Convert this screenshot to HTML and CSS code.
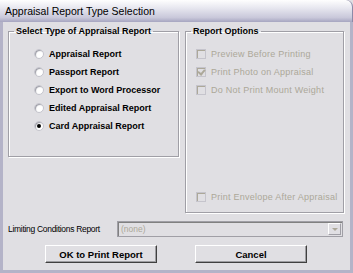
FILE: index.html
```html
<!DOCTYPE html>
<html lang="en">
<head>
  <meta charset="UTF-8" />
  <title>Appraisal Report Type Selection</title>
  <link rel="stylesheet" href="styles.css">
</head>
<body>

<div class="window">
  <div class="titlebar">Appraisal Report Type Selection</div>

  <div class="client">
    <div class="groups">
      <!-- Report type -->
      <fieldset class="group typeGroup">
        <legend>Select Type of Appraisal Report</legend>
        <div class="items">
          <div class="option"><span class="radio"></span>Appraisal Report</div>
          <div class="option"><span class="radio"></span>Passport Report</div>
          <div class="option"><span class="radio"></span>Export to Word Processor</div>
          <div class="option"><span class="radio"></span>Edited Appraisal Report</div>
          <div class="option"><span class="radio checked"></span>Card Appraisal Report</div>
        </div>
      </fieldset>

      <!-- Options -->
      <fieldset class="group optGroup">
        <legend>Report Options</legend>
        <div class="items">
          <div class="check"><span class="box"></span>Preview Before Printing</div>
          <div class="check"><span class="box ticked"></span>Print Photo on Appraisal</div>
          <div class="check"><span class="box"></span>Do Not Print Mount Weight</div>
          <div class="spacer"></div>
          <div class="check"><span class="box"></span>Print Envelope After Appraisal</div>
        </div>
      </fieldset>
    </div>

    <div class="limitRow">
      <span class="limitLabel">Limiting Conditions Report</span>
      <div class="combo">
        <span class="comboText">(none)</span>
        <span class="comboBtn"></span>
      </div>
    </div>

    <div class="buttons">
      <button class="btn">OK to Print Report</button>
      <button class="btn">Cancel</button>
    </div>
  </div>
</div>

</body>
</html>
```

FILE: styles.css
```css
* { box-sizing: border-box; }

body {
  margin: 0;
  background: #e0dfe3;
  font-family: "Liberation Sans", Arial, sans-serif;
  font-size: 9px;
  color: #000;
}

.window {
  width: 353px;
  height: 273px;
  display: flex;
  flex-direction: column;
  background: #e0dfe3;
  border-left: 3px solid #b4b3c8;
  border-right: 3px solid #b4b3c8;
  border-bottom: 3px solid #b4b3c8;
  border-top-right-radius: 7px;
}

.titlebar {
  height: 22px;
  margin: 0 -3px;
  padding: 5px 0 0 5px;
  font-size: 10.5px;
  color: #000;
  background: linear-gradient(to bottom, #fefefe 0%, #e8e8f0 35%, #c9c8da 80%, #a6a5c0 100%);
  border-top-right-radius: 7px;
  border-right: 1px solid #8b8aa8;
}

.client {
  flex-grow: 1;
  display: flex;
  flex-direction: column;
  padding: 4px 6px 0 5px;
}

.groups {
  display: flex;
  align-items: flex-start;
  gap: 6px;
}

.group {
  margin: 0;
  padding: 0;
  border: 1px solid #a09fa6;
  box-shadow: inset 1px 1px 0 #fff, 1px 1px 0 #fff;
  display: flex;
  flex-direction: column;
}

.group legend {
  font-weight: bold;
  color: #000;
  white-space: nowrap;
  padding: 0 2px;
  margin-left: 5px;
  font-size: 9px;
}

.items {
  flex-grow: 1;
  display: flex;
  flex-direction: column;
}

.typeGroup {
  width: 171px;
  height: 131px;
}

.typeGroup .items {
  padding: 9px 0 0 25px;
}

.optGroup {
  width: 159px;
  height: 187px;
  color: #aca899;
}

.optGroup .items {
  padding: 9px 0 6px 10px;
}

.option, .check {
  height: 18px;
  display: flex;
  align-items: center;
  flex-shrink: 0;
}

.option {
  font-weight: bold;
}

.check {
  letter-spacing: 0.25px;
}

.radio {
  width: 10px;
  height: 10px;
  margin-right: 5px;
  border-radius: 50%;
  background: #fff;
  border: 1px solid #c4c4cc;
  box-shadow: inset 1px 1px 1px #9a9aa4;
  position: relative;
}

.radio.checked::after {
  content: "";
  position: absolute;
  left: 2px;
  top: 2px;
  width: 4px;
  height: 4px;
  border-radius: 50%;
  background: #000;
}

.box {
  width: 10px;
  height: 10px;
  margin-right: 5px;
  border: 1px solid #c5c4cc;
  box-shadow: inset 1px 1px 0 #aca899;
  position: relative;
}

.box.ticked::after {
  content: "";
  position: absolute;
  left: 2px;
  top: 0;
  width: 3px;
  height: 5px;
  border: solid #aca899;
  border-width: 0 2px 2px 0;
  transform: rotate(40deg);
}

.spacer {
  flex-grow: 1;
}

.limitRow {
  display: flex;
  align-items: center;
  margin-top: 8px;
  height: 16px;
}

.limitLabel {
  width: 109px;
  font-size: 8.5px;
  letter-spacing: -0.3px;
}

.combo {
  width: 226px;
  height: 16px;
  display: flex;
  align-items: center;
  border: 1px solid #a09fa6;
  box-shadow: inset 1px 1px 0 #808080;
  background: #e0dfe3;
}

.comboText {
  flex-grow: 1;
  padding-left: 3px;
  color: #aca899;
  font-size: 8.5px;
}

.comboBtn {
  width: 13px;
  height: 12px;
  margin-right: 1px;
  border: 1px solid #fff;
  border-right-color: #a09fa6;
  border-bottom-color: #a09fa6;
  position: relative;
}

.comboBtn::after {
  content: "";
  position: absolute;
  left: 3px;
  top: 4px;
  border: 3px solid transparent;
  border-top: 3px solid #aca899;
}

.buttons {
  display: flex;
  justify-content: center;
  gap: 38px;
  margin-top: 8px;
}

.btn {
  width: 112px;
  height: 18px;
  padding: 0;
  font-family: "Liberation Sans", Arial, sans-serif;
  font-size: 9.5px;
  font-weight: bold;
  background: #e0dfe3;
  border: 1px solid;
  border-color: #fff #404040 #404040 #fff;
  box-shadow: inset -1px -1px 0 #9d9da1;
}
```
